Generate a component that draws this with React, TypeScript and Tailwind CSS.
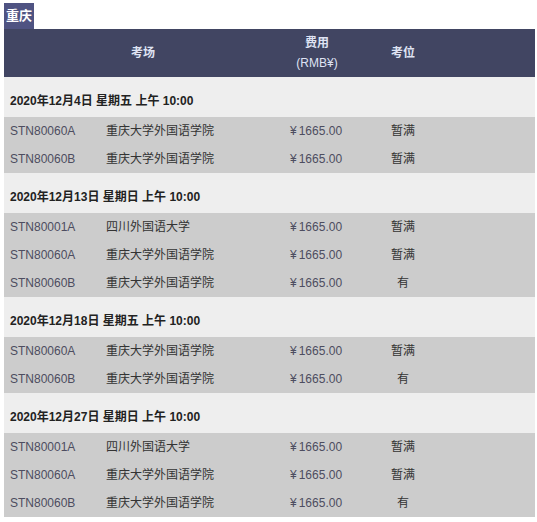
import React from 'react';

type Row = { code: string; name: string; price: string; seat: string };
type Group = { date: string; rows: Row[] };

const CQ = '重庆大学外国语学院';
const SC = '四川外国语大学';

const groups: Group[] = [
  {
    date: '2020年12月4日 星期五 上午 10:00',
    rows: [
      { code: 'STN80060A', name: CQ, price: '¥1665.00', seat: '暂满' },
      { code: 'STN80060B', name: CQ, price: '¥1665.00', seat: '暂满' },
    ],
  },
  {
    date: '2020年12月13日 星期日 上午 10:00',
    rows: [
      { code: 'STN80001A', name: SC, price: '¥1665.00', seat: '暂满' },
      { code: 'STN80060A', name: CQ, price: '¥1665.00', seat: '暂满' },
      { code: 'STN80060B', name: CQ, price: '¥1665.00', seat: '有' },
    ],
  },
  {
    date: '2020年12月18日 星期五 上午 10:00',
    rows: [
      { code: 'STN80060A', name: CQ, price: '¥1665.00', seat: '暂满' },
      { code: 'STN80060B', name: CQ, price: '¥1665.00', seat: '有' },
    ],
  },
  {
    date: '2020年12月27日 星期日 上午 10:00',
    rows: [
      { code: 'STN80001A', name: SC, price: '¥1665.00', seat: '暂满' },
      { code: 'STN80060A', name: CQ, price: '¥1665.00', seat: '暂满' },
      { code: 'STN80060B', name: CQ, price: '¥1665.00', seat: '有' },
    ],
  },
];

const cols = 'grid grid-cols-[102px_176px_70px_102px_1fr]';

const App: React.FC = () => {
  return (
    <div
      className="min-h-screen bg-white pl-1 pr-[2px] pt-[3px] text-[12px] text-[#333]"
      style={{ fontFamily: '"Liberation Sans", Arial, "Noto Sans CJK SC", sans-serif' }}
    >
      <div className="inline-block h-[26px] w-[30px] bg-[#4f5382] text-center text-[13px] font-bold leading-[26px] text-white">
        重庆
      </div>

      {/* 表头 */}
      <div className={`${cols} h-12 items-center bg-[#414562] font-bold text-[#dfe3f3]`}>
        <div className="col-span-2 text-center">考场</div>
        <div className="text-center font-normal leading-5">
          <div className="font-bold">费用</div>
          <div>(RMB¥)</div>
        </div>
        <div className="text-center">考位</div>
        <div />
      </div>

      {groups.map((g) => (
        <div key={g.date}>
          <div className="h-10 bg-[#eeeeee] pl-[6px] pt-4 font-bold leading-4 text-[#222]">{g.date}</div>
          <div className="bg-[#cccccc]">
            {g.rows.map((r, i) => (
              <div key={i} className={`${cols} h-7 items-center`}>
                <div className="pl-[6px] text-[#4d4d60]">{r.code}</div>
                <div>{r.name}</div>
                <div className="pl-2 text-[#4d4d60]">
                  ¥<span className="ml-[2px]">{r.price.slice(1)}</span>
                </div>
                <div className="text-center">{r.seat}</div>
                <div />
              </div>
            ))}
          </div>
        </div>
      ))}
    </div>
  );
};

export default App;
